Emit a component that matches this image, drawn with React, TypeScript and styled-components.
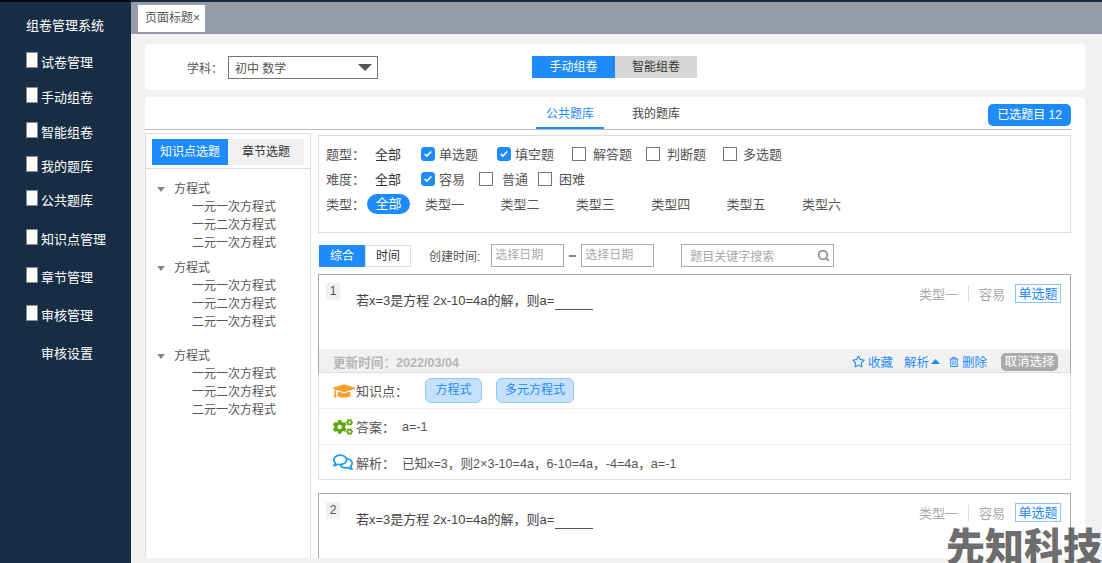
import React from 'react';
import styled, {createGlobalStyle} from 'styled-components';
import {FaCogs, FaGraduationCap, FaRegComments, FaRegStar, FaRegTrashAlt} from 'react-icons/fa';
import {Search} from 'lucide-react';

const GlobalStyle = createGlobalStyle`
  html, body {
    margin: 0;
    padding: 0;
    height: 100%;
    overflow: hidden;
    background: #f1f1f1;
  }
  * {
    box-sizing: border-box;
  }
  body {
    font-family: "Liberation Sans", "Noto Sans CJK SC", sans-serif;
    font-size: 13px;
    color: #555;
  }
`

const Page = styled.div`
  position: relative;
  width: 1102px;
  height: 563px;
  overflow: hidden;
  display: flex;
  flex-direction: column;
`

const TopLine = styled.div`
  height: 2px;
  flex: none;
  background: linear-gradient(to right, #05090e 131px, #16293d 131px);
`

const Body = styled.div`
  flex: 1;
  min-height: 0;
  display: flex;
`

const Sidebar = styled.nav`
  width: 131px;
  flex: none;
  background: #172d44;
  color: #fff;
  padding: 15px 0 0 26px;
`

const Brand = styled.div`
  height: 35px;
  line-height: 18px;
  margin-bottom: 2px;
`

const NavRow = styled.div<{$h: number}>`
  height: ${props => props.$h}px;
  display: flex;
  align-items: flex-start;
  gap: 3px;
  line-height: 18px;
  padding-left: 15px;
`

const NavThumb = styled.span`
  width: 12px;
  height: 16px;
  margin: -2px 0 0 -15px;
  flex: none;
  background: #fff;
  border: 1px solid #8a8a8a;
`

const Main = styled.main`
  flex: 1;
  min-width: 0;
  display: flex;
  flex-direction: column;
`

const TabBar = styled.div`
  height: 32px;
  flex: none;
  background: #969da8;
  padding: 3px 0 0 7px;
`

const PageTab = styled.div`
  width: 67px;
  height: 27px;
  background: #fff;
  font-size: 12px;
  line-height: 27px;
  padding-left: 7px;
  white-space: nowrap;
`

const Content = styled.div`
  flex: 1;
  min-height: 0;
  padding: 10px 17px 5px 14px;
  display: flex;
  flex-direction: column;
  gap: 7px;
`

const SubjectCard = styled.section`
  height: 46px;
  flex: none;
  background: #fff;
  border-radius: 4px;
  display: flex;
  align-items: center;
  padding-left: 42px;
`

const FieldLabel = styled.span`
  width: 41px;
  font-size: 12px;
`

const SelectBox = styled.div`
  width: 150px;
  height: 23px;
  border: 1px solid #767676;
  line-height: 24px;
  padding-left: 6px;
  font-size: 12px;
  position: relative;
`

const SelectArrow = styled.i`
  position: absolute;
  right: 5px;
  top: 7px;
  border-left: 7px solid transparent;
  border-right: 7px solid transparent;
  border-top: 7px solid #555;
`

const Switcher = styled.div`
  margin-left: 154px;
  display: flex;
`

const SwitchBtn = styled.div<{$on?: boolean}>`
  width: ${props => (props.$on ? 83 : 82)}px;
  height: 22px;
  line-height: 22px;
  text-align: center;
  font-size: 12px;
  background: ${props => (props.$on ? '#1e8bfb' : '#d6d6d6')};
  color: ${props => (props.$on ? '#fff' : '#333')};
`

const BankCard = styled.section`
  flex: 1;
  min-height: 0;
  background: #fff;
  border-radius: 4px;
  padding-right: 14px;
  overflow: hidden;
  display: flex;
  flex-direction: column;
`

const BankHeader = styled.header`
  height: 33px;
  flex: none;
  border-bottom: 1px solid #bbb;
  position: relative;
  display: flex;
  padding-left: 391px;
`

const BankTab = styled.div<{$on?: boolean}>`
  width: 68px;
  height: 32px;
  margin-right: 18px;
  text-align: center;
  font-size: 12px;
  line-height: 35px;
  color: ${props => (props.$on ? '#1e8bfb' : '#444')};
  border-bottom: 2px solid ${props => (props.$on ? '#1e8bfb' : 'transparent')};
`

const PickedBtn = styled.div`
  position: absolute;
  right: 0;
  top: 7px;
  width: 83px;
  height: 22px;
  border-radius: 5px;
  background: #1e8bfb;
  color: #fff;
  font-size: 12px;
  line-height: 22px;
  text-align: center;
`

const BankBody = styled.div`
  flex: 1;
  min-height: 0;
  display: flex;
  padding-top: 3px;
`

const TreePanel = styled.aside`
  width: 166px;
  flex: none;
  border: 1px solid #ddd;
  border-bottom: none;
`

const TreeTabs = styled.div`
  height: 35px;
  padding: 5px 6px 0;
  border-bottom: 1px solid #ddd;
  display: flex;
`

const TreeTab = styled.div<{$on?: boolean}>`
  flex: 1;
  height: 26px;
  line-height: 26px;
  text-align: center;
  font-size: 12px;
  background: ${props => (props.$on ? '#1e8bfb' : '#f1f1f1')};
  color: ${props => (props.$on ? '#fff' : '#333')};
`

const TreeBody = styled.div`
  padding: 11px 0 0 11px;
`

const TreeGroup = styled.div<{$gap: number}>`
  margin-bottom: ${props => props.$gap}px;
`

const TreeHead = styled.div`
  height: 18px;
  line-height: 18px;
  font-size: 12px;
  display: flex;
  align-items: center;
  gap: 9px;
`

const Caret = styled.i`
  border-left: 4px solid transparent;
  border-right: 4px solid transparent;
  border-top: 5px solid #888;
`

const TreeLeaf = styled.div`
  height: 18px;
  line-height: 18px;
  font-size: 12px;
  padding-left: 35px;
`

const Right = styled.div`
  flex: 1;
  min-width: 0;
  margin-left: 7px;
  padding-top: 2px;
`

const FilterBox = styled.div`
  height: 98px;
  border: 1px solid #ddd;
  padding: 5px 0 0 7px;
`

const FilterRow = styled.div`
  height: 25px;
  display: flex;
  align-items: center;
  position: relative;
`

const FilterLabel = styled.span`
  width: 49px;
  flex: none;
`

const FilterAll = styled.span`
  width: 46px;
  color: #333;
`

const Option = styled.label<{$w: number; $gap: number}>`
  width: ${props => props.$w}px;
  display: flex;
  align-items: center;
  gap: ${props => props.$gap}px;
`

const Check = styled.span<{$on?: boolean}>`
  width: 14px;
  height: 14px;
  flex: none;
  border-radius: ${props => (props.$on ? 3 : 0)}px;
  border: 1px solid ${props => (props.$on ? '#1e8bfb' : '#767676')};
  background: ${props => (props.$on ? '#1e8bfb' : '#fff')};
  display: flex;
  align-items: center;
  justify-content: center;
`

const TypePill = styled.span`
  width: 43px;
  height: 20px;
  margin: 0 15px 0 -8px;
  border-radius: 10px;
  background: #1e8bfb;
  color: #fff;
  line-height: 20px;
  text-align: center;
`

const TypeItem = styled.span`
  width: 75.4px;
  flex: none;
`

const Toolbar = styled.div`
  height: 23px;
  margin-top: 11px;
  display: flex;
  align-items: center;
  font-size: 12px;
`

const Sort = styled.div<{$on?: boolean}>`
  width: 46px;
  height: 22px;
  margin-left: ${props => (props.$on ? 1 : 0)}px;
  line-height: 20px;
  text-align: center;
  border: 1px solid ${props => (props.$on ? '#1e8bfb' : '#ddd')};
  background: ${props => (props.$on ? '#1e8bfb' : '#fff')};
  color: ${props => (props.$on ? '#fff' : '#333')};
`

const ToolLabel = styled.span`
  margin: 0 11px 0 18px;
`

const DateInput = styled.div`
  width: 73px;
  height: 23px;
  border: 1px solid #aaa;
  line-height: 21px;
  padding-left: 3px;
  color: #aaa;
`

const Dash = styled.span`
  width: 7px;
  height: 2px;
  margin: 0 5px;
  background: #888;
`

const SearchBox = styled.div`
  width: 153px;
  height: 23px;
  margin-left: 27px;
  border: 1px solid #aaa;
  padding: 0 3px 0 8px;
  color: #aaa;
  display: flex;
  align-items: center;
  justify-content: space-between;
`

const Question = styled.article<{$top: number}>`
  position: relative;
  margin-top: ${props => props.$top}px;
  border: 1px solid #aaa;
  border-bottom: none;
`

const Stem = styled.div`
  height: 74px;
  display: flex;
  padding: 8px 0 0 7px;
`

const Num = styled.span`
  width: 14px;
  height: 17px;
  background: #f1f1f1;
  font-size: 12px;
  line-height: 17px;
  text-align: center;
`

const StemText = styled.p`
  margin: 9px 0 0 16px;
  font-size: 13px;
  line-height: 18px;
  color: #444;
  display: flex;
  align-items: flex-start;
`

const Blank = styled.span`
  width: 38px;
  height: 18px;
  margin-left: 1px;
  border-bottom: 1px solid #555;
`

const Meta = styled.div`
  position: absolute;
  top: 9px;
  right: 9px;
  display: flex;
  align-items: center;
  color: #aaa;
  font-size: 13px;
`

const MetaDivider = styled.i`
  width: 1px;
  height: 16px;
  background: #ddd;
  margin: 0 10px;
`

const KindTag = styled.span`
  width: 46px;
  height: 19px;
  margin-left: 10px;
  border: 1px solid #8cc4fa;
  color: #1e8bfb;
  line-height: 17px;
  text-align: center;
`

const FootBar = styled.div`
  height: 24px;
  background: #f1f1f1;
  border-bottom: 1px solid #ddd;
  padding: 2px 12px 0 14px;
  display: flex;
  align-items: center;
`

const Updated = styled.span`
  flex: 1;
  color: #b5b5b5;
  font-size: 12.6px;
  font-weight: 700;
`

const Action = styled.span<{$gap: number; $iconGap?: number}>`
  color: #1e8bfb;
  font-size: 12.5px;
  margin-right: ${props => props.$gap}px;
  display: flex;
  align-items: center;
  gap: ${props => props.$iconGap ?? 3}px;
`

const Cancel = styled.span`
  width: 57px;
  height: 18px;
  border-radius: 5px;
  background: #aaa;
  color: #fff;
  font-size: 12.5px;
  line-height: 18px;
  text-align: center;
`

const Details = styled.div`
  margin: 0 -1px;
  border: 1px solid #ddd;
  border-top: none;
  background: #fff;
`

const DetailRow = styled.div<{$h: number; $last?: boolean}>`
  height: ${props => props.$h}px;
  padding-left: 14px;
  display: flex;
  align-items: center;
  font-size: 12.6px;
  color: #555;
  border-bottom: ${props => (props.$last ? 'none' : '1px solid #eee')};
`

const IconCell = styled.span<{$color: string}>`
  width: 23px;
  flex: none;
  color: ${props => props.$color};
  display: flex;
  align-items: center;
`

const DetailLabel = styled.span`
  width: 46px;
  flex: none;
  font-size: 13px;
  white-space: nowrap;
`

const TagList = styled.div`
  margin-left: 23px;
  display: flex;
  gap: 14px;
`

const KnowledgeTag = styled.span<{$w: number}>`
  width: ${props => props.$w}px;
  height: 25px;
  background: #c5e1fc;
  border: 1px solid #91c6f9;
  border-radius: 6px;
  color: #1e8bfb;
  font-size: 12px;
  line-height: 23px;
  text-align: center;
`

const Watermark = styled.div`
  position: absolute;
  right: 0;
  bottom: 0;
  font-family: "Noto Sans CJK SC", sans-serif;
  font-size: 39px;
  font-weight: 900;
  line-height: 38px;
  color: rgba(70, 70, 70, 0.8);
  white-space: nowrap;
`

const navRows = [
    {label: '试卷管理', h: 35},
    {label: '手动组卷', h: 35},
    {label: '智能组卷', h: 34},
    {label: '我的题库', h: 34},
    {label: '公共题库', h: 39},
    {label: '知识点管理', h: 38},
    {label: '章节管理', h: 38},
    {label: '审核管理', h: 38},
    {label: '审核设置', h: 30, bare: true},
]

const leaves = ['一元一次方程式', '一元二次方程式', '二元一次方程式']

const types = ['类型一', '类型二', '类型三', '类型四', '类型五', '类型六']

const Tick = () => (
    <svg width="10" height="10" viewBox="0 0 24 24" fill="none" stroke="#fff" strokeWidth="4">
        <polyline points="20 6 9 17 4 12" />
    </svg>
)

const QuestionHead = ({index}: {index: number}) => (
    <>
        <Stem>
            <Num>{index}</Num>
            <StemText>若x=3是方程 2x-10=4a的解，则a=<Blank /></StemText>
        </Stem>
        <Meta>
            <span>类型一</span>
            <MetaDivider />
            <span>容易</span>
            <KindTag>单选题</KindTag>
        </Meta>
    </>
)

const App = () => {
    return (
        <Page>
            <GlobalStyle />
            <TopLine />
            <Body>
                <Sidebar>
                    <Brand>组卷管理系统</Brand>
                    {navRows.map(row => (
                        <NavRow key={row.label} $h={row.h}>
                            {!row.bare && <NavThumb />}
                            <span>{row.label}</span>
                        </NavRow>
                    ))}
                </Sidebar>
                <Main>
                    <TabBar>
                        <PageTab>页面标题×</PageTab>
                    </TabBar>
                    <Content>
                        <SubjectCard>
                            <FieldLabel>学科：</FieldLabel>
                            <SelectBox>
                                初中 数学
                                <SelectArrow />
                            </SelectBox>
                            <Switcher>
                                <SwitchBtn $on>手动组卷</SwitchBtn>
                                <SwitchBtn>智能组卷</SwitchBtn>
                            </Switcher>
                        </SubjectCard>
                        <BankCard>
                            <BankHeader>
                                <BankTab $on>公共题库</BankTab>
                                <BankTab>我的题库</BankTab>
                                <PickedBtn>已选题目 12</PickedBtn>
                            </BankHeader>
                            <BankBody>
                                <TreePanel>
                                    <TreeTabs>
                                        <TreeTab $on>知识点选题</TreeTab>
                                        <TreeTab>章节选题</TreeTab>
                                    </TreeTabs>
                                    <TreeBody>
                                        {[7, 16, 0].map((gap, i) => (
                                            <TreeGroup key={i} $gap={gap}>
                                                <TreeHead><Caret />方程式</TreeHead>
                                                {leaves.map(leaf => <TreeLeaf key={leaf}>{leaf}</TreeLeaf>)}
                                            </TreeGroup>
                                        ))}
                                    </TreeBody>
                                </TreePanel>
                                <Right>
                                    <FilterBox>
                                        <FilterRow>
                                            <FilterLabel>题型：</FilterLabel>
                                            <FilterAll>全部</FilterAll>
                                            <Option $w={76} $gap={4}><Check $on><Tick /></Check>单选题</Option>
                                            <Option $w={75} $gap={4}><Check $on><Tick /></Check>填空题</Option>
                                            <Option $w={74} $gap={7}><Check />解答题</Option>
                                            <Option $w={77} $gap={7}><Check />判断题</Option>
                                            <Option $w={70} $gap={6}><Check />多选题</Option>
                                        </FilterRow>
                                        <FilterRow>
                                            <FilterLabel>难度：</FilterLabel>
                                            <FilterAll>全部</FilterAll>
                                            <Option $w={58} $gap={4}><Check $on><Tick /></Check>容易</Option>
                                            <Option $w={59} $gap={9}><Check />普通</Option>
                                            <Option $w={60} $gap={7}><Check />困难</Option>
                                        </FilterRow>
                                        <FilterRow>
                                            <FilterLabel>类型：</FilterLabel>
                                            <TypePill>全部</TypePill>
                                            {types.map(type => <TypeItem key={type}>{type}</TypeItem>)}
                                        </FilterRow>
                                    </FilterBox>
                                    <Toolbar>
                                        <Sort $on>综合</Sort>
                                        <Sort>时间</Sort>
                                        <ToolLabel>创建时间:</ToolLabel>
                                        <DateInput>选择日期</DateInput>
                                        <Dash />
                                        <DateInput>选择日期</DateInput>
                                        <SearchBox>
                                            题目关键字搜索
                                            <Search size={13} color="#888" strokeWidth={3} />
                                        </SearchBox>
                                    </Toolbar>
                                    <Question $top={7}>
                                        <QuestionHead index={1} />
                                        <FootBar>
                                            <Updated>更新时间：2022/03/04</Updated>
                                            <Action $gap={11}><FaRegStar size={13} />收藏</Action>
                                            <Action $gap={9} $iconGap={2}>解析
                                                <svg width="9" height="6" viewBox="0 0 9 6"><path d="M0 5 L4.500 0 L9 5 Z" fill="#1e8bfb" /></svg>
                                            </Action>
                                            <Action $gap={14}><FaRegTrashAlt size={10} />删除</Action>
                                            <Cancel>取消选择</Cancel>
                                        </FootBar>
                                        <Details>
                                            <DetailRow $h={36}>
                                                <IconCell $color="#f5a02c"><FaGraduationCap size={22} /></IconCell>
                                                <DetailLabel>知识点：</DetailLabel>
                                                <TagList>
                                                    <KnowledgeTag $w={57}>方程式</KnowledgeTag>
                                                    <KnowledgeTag $w={78}>多元方程式</KnowledgeTag>
                                                </TagList>
                                            </DetailRow>
                                            <DetailRow $h={36}>
                                                <IconCell $color="#62a60a"><FaCogs size={20} /></IconCell>
                                                <DetailLabel>答案：</DetailLabel>
                                                a=-1
                                            </DetailRow>
                                            <DetailRow $h={34} $last>
                                                <IconCell $color="#1e9af0"><FaRegComments size={20} /></IconCell>
                                                <DetailLabel>解析：</DetailLabel>
                                                已知x=3，则2×3-10=4a，6-10=4a，-4=4a，a=-1
                                            </DetailRow>
                                        </Details>
                                    </Question>
                                    <Question $top={13}>
                                        <QuestionHead index={2} />
                                    </Question>
                                </Right>
                            </BankBody>
                        </BankCard>
                    </Content>
                </Main>
            </Body>
            <Watermark>先知科技</Watermark>
        </Page>
    )
}

export default App
